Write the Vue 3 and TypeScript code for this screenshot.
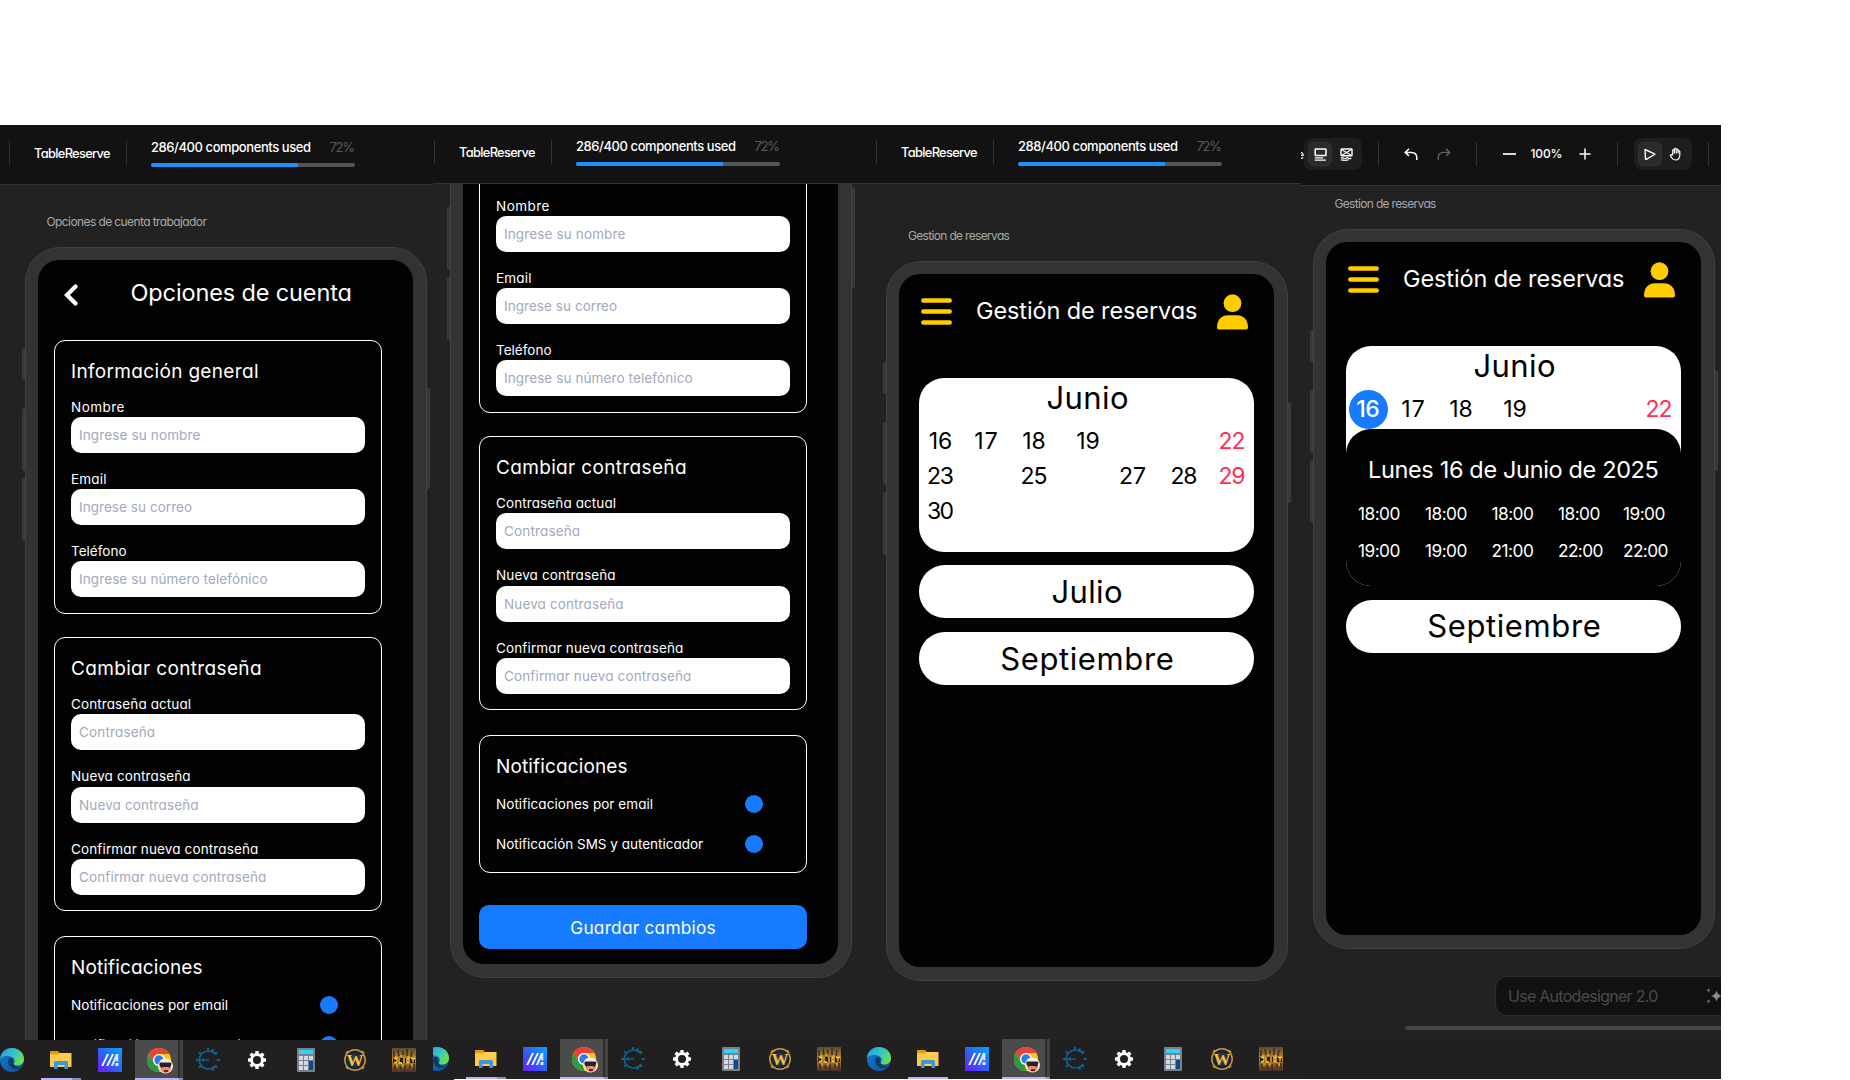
<script setup lang="ts">
interface Field { label: string; labelWidth: number; hint: string; hintWidth: number }
interface Day { n: string; col: number; row: number; sunday?: boolean }
interface Editor { id: string; used: string; left: number; top: number }

// Spreads the letters of a label so that its drawn width matches the design value.
const vFit = {
  mounted(el: HTMLElement, binding: { value: number }) {
    const size = parseFloat(getComputedStyle(el).fontSize)
    const natural = el.getBoundingClientRect().width
    const count = (el.textContent ?? '').trim().length
    const spacing = (binding.value + size * 0.08 - natural) / Math.max(1, count - 1)
    el.style.letterSpacing = spacing.toFixed(3) + 'px'
    el.style.marginRight = (-spacing).toFixed(3) + 'px'
  },
}

const editors: Editor[] = [
  { id: 'a', used: '286/400 components used', left: 25, top: 62 },
  { id: 'b', used: '286/400 components used', left: 25, top: -138 },
  { id: 'c', used: '288/400 components used', left: 19, top: 77 },
]

const general: Field[] = [
  { label: 'Nombre', labelWidth: 52.3, hint: 'Ingrese su nombre', hintWidth: 120.3 },
  { label: 'Email', labelWidth: 34.5, hint: 'Ingrese su correo', hintWidth: 112 },
  { label: 'Teléfono', labelWidth: 54.5, hint: 'Ingrese su número telefónico', hintWidth: 187.5 },
]
const password: Field[] = [
  { label: 'Contraseña actual', labelWidth: 119, hint: 'Contraseña', hintWidth: 75 },
  { label: 'Nueva contraseña', labelWidth: 118.5, hint: 'Nueva contraseña', hintWidth: 118.5 },
  { label: 'Confirmar nueva contraseña', labelWidth: 186.3, hint: 'Confirmar nueva contraseña', hintWidth: 186.3 },
]
const formCards = [
  { id: 'general', title: 'Información general', width: 186, fields: general },
  { id: 'password', title: 'Cambiar contraseña', width: 189, fields: password },
]

const firstWeek: Day[] = [
  { n: '16', col: 1, row: 1 },
  { n: '17', col: 2, row: 1 },
  { n: '18', col: 3, row: 1 },
  { n: '19', col: 4, row: 1 },
  { n: '22', col: 7, row: 1, sunday: true },
]
const june: Day[] = [
  ...firstWeek,
  { n: '23', col: 1, row: 2 },
  { n: '25', col: 3, row: 2 },
  { n: '27', col: 5, row: 2 },
  { n: '28', col: 6, row: 2 },
  { n: '29', col: 7, row: 2, sunday: true },
  { n: '30', col: 1, row: 3 },
]
const dayWidth: Record<string, number> = { '16': 21.5, '17': 21.5, '18': 21.5, '19': 21.5 }
const hours = ['18:00', '18:00', '18:00', '18:00', '19:00', '19:00', '19:00', '21:00', '22:00', '22:00']
const teeth = [0, 45, 90, 135, 180, 225, 270, 315]
const ceTeeth = [50, 90, 130, 180, 230, 270, 310]
</script>

<template>
  <div class="page">
    <svg class="defs" width="0" height="0" aria-hidden="true">
      <defs>
        <linearGradient id="edgeTop" x1="0" y1="0" x2="1" y2="0.6"><stop offset="0" stop-color="#1f9ee6" /><stop offset=".55" stop-color="#35c1c9" /><stop offset="1" stop-color="#6be04c" /></linearGradient>
        <linearGradient id="edgeLow" x1="0" y1="0" x2="1" y2="1"><stop offset="0" stop-color="#1380d8" /><stop offset="1" stop-color="#0c4f9c" /></linearGradient>
        <linearGradient id="maBg" x1="0" y1="1" x2="1" y2="0"><stop offset="0" stop-color="#6a1cff" /><stop offset=".5" stop-color="#2d63f6" /><stop offset="1" stop-color="#00a8ff" /></linearGradient>
        <radialGradient id="wBg"><stop offset="0" stop-color="#3a4a66" /><stop offset="1" stop-color="#141a26" /></radialGradient>
        <linearGradient id="artBg" x1="0" y1="0" x2="0" y2="1"><stop offset="0" stop-color="#574c35" /><stop offset=".5" stop-color="#c98a22" /><stop offset="1" stop-color="#46302c" /></linearGradient>
      </defs>
    </svg>

    <main class="board">
      <section v-for="e in editors" :key="e.id" class="strip" :class="'strip-' + e.id">
        <div class="inner">
          <header class="bar">
            <i class="sep"></i>
            <div class="project"><span v-fit="75.5">TableReserve</span></div>
            <i class="sep"></i>
            <div class="usage">
              <div class="usage-text">
                <span v-fit="159">{{ e.used }}</span>
                <span v-fit="24.5" class="percent">72%</span>
              </div>
              <div class="track"><div class="fill"></div></div>
            </div>
          </header>

          <div class="canvas">
            <div v-if="e.id === 'a'" class="frame-name"><span v-fit="159.5">Opciones de cuenta trabajador</span></div>
            <div v-if="e.id === 'c'" class="frame-name"><span v-fit="101">Gestion de reservas</span></div>

            <div class="phone" :style="{ left: e.left + 'px', top: e.top + 'px' }">
              <i class="key k1"></i><i class="key k2"></i><i class="key k3"></i><i class="key k4"></i>

              <div v-if="e.id !== 'c'" class="screen account">
                <div class="account-head">
                  <svg class="chevron" width="14" height="22" viewBox="0 0 14 22"><path d="M11.5 2.5 3 11l8.500 8.500" fill="none" stroke="#fff" stroke-width="4.200" stroke-linecap="round" stroke-linejoin="miter" /></svg>
                  <h1><span v-fit="219.500">Opciones de cuenta</span></h1>
                </div>
                <div v-for="c in formCards" :key="c.id" class="card" :class="c.id">
                  <h2><span v-fit="c.width">{{ c.title }}</span></h2>
                  <div v-for="f in c.fields" :key="f.label" class="field">
                    <div class="label"><span v-fit="f.labelWidth">{{ f.label }}</span></div>
                    <div class="input"><span v-fit="f.hintWidth">{{ f.hint }}</span></div>
                  </div>
                </div>
                <div class="card notices">
                  <h2><span v-fit="130">Notificaciones</span></h2>
                  <div class="notice"><span v-fit="156">Notificaciones por email</span><i class="dot"></i></div>
                  <div class="notice"><span v-fit="206">Notificación SMS y autenticador</span><i class="dot"></i></div>
                </div>
                <div class="save"><span v-fit="144">Guardar cambios</span></div>
              </div>

              <div v-else class="screen bookings">
                <div class="bookings-head">
                  <svg class="menu" width="31" height="27" viewBox="0 0 31 27"><path d="M2.400 2.500h26.200M2.400 13.500h26.200M2.400 24.500h26.200" stroke="#fc0" stroke-width="4.700" stroke-linecap="round" /></svg>
                  <h1><span v-fit="219.500">Gestión de reservas</span></h1>
                  <svg class="user" width="31" height="36" viewBox="0 0 31 36"><circle cx="15.500" cy="9.200" r="8.900" fill="#fc0" /><path d="M2 35.500Q0 35.500 0 33.500C0 26 4.500 21.200 11 21.200h9c6.500 0 11 4.800 11 12.300q0 2-2 2z" fill="#fc0" /></svg>
                </div>
                <div class="month open">
                  <h3><span v-fit="79.500">Junio</span></h3>
                  <div class="days">
                    <span v-for="d in june" :key="d.n" v-fit="dayWidth[d.n] ?? 25" :class="['c' + d.col, 'r' + d.row, { sunday: d.sunday }]">{{ d.n }}</span>
                  </div>
                </div>
                <div class="month"><span v-fit="68.500">Julio</span></div>
                <div class="month"><span v-fit="171">Septiembre</span></div>
              </div>
            </div>
          </div>

          <footer class="taskbar">
            <div class="task">
              <svg width="24" height="24" viewBox="0 0 24 24"><circle cx="12" cy="12" r="12" fill="url(#edgeLow)" /><path d="M0 11C.5 4.500 5.500 0 12 0c7 0 12 5 12 11 0 4-3 6.500-6.500 6.500-2.500 0-4-1-3.500-2 1.500-2 1-6-3.500-7C6 7.500 2 8.500 0 11z" fill="url(#edgeTop)" /><path d="M9 10.500c-2 4 0 8.500 4 10 3 1.200 6.500.5 9-1.800-1 .5-3.500 1-6-.2-3-1.500-3.500-4-2.500-6.500-.5-1.500-3-2.500-4.500-1.500z" fill="#123b63" /></svg>
            </div>
            <div class="task open-app">
              <svg width="22" height="20" viewBox="0 0 22 20"><path d="M0 1h8l2 2H0z" fill="#e09a00" /><path d="M0 3h21.500v14H0z" fill="#ffcb4f" /><path d="M0 3h10l-1.500 1.500H0z" fill="#e5a50a" /><path d="M4 19v-6.500q0-1.500 1.500-1.500h11q1.500 0 1.500 1.500V19h-3.500v-4h-7v4z" fill="#3a96dd" /></svg>
            </div>
            <div class="task">
              <svg width="24" height="24" viewBox="0 0 24 24"><path d="M0 0h24v24H0z" fill="url(#maBg)" /><path d="M3.200 18 9 6h2l-5.800 12zM8.200 18 14 6h2l-5.800 12z" fill="#fff" /><path d="M12.800 18 18 6h2.300v7.500h-2V11l-3.300 7zM17.500 15h3v3h-3z" fill="#dfe8ff" /></svg>
            </div>
            <div class="task current">
              <svg width="28" height="26" viewBox="0 0 28 26"><circle cx="12" cy="12" r="12" fill="#fbc116" /><path d="M1.600 6A12 12 0 0 1 22.400 6H12a6 6 0 0 0-5.200 9z" fill="#ea4335" /><path d="M1.600 6A12 12 0 0 0 12 24l5.200-9A6 6 0 0 1 6.800 15z" fill="#2a9a45" /><circle cx="12" cy="12" r="6" fill="#fff" /><circle cx="12" cy="12" r="4.700" fill="#2a7de9" /><circle cx="18.500" cy="18" r="7.600" fill="#f7e3c6" /><path d="M13.500 17h10v4.500q-2 4-5 3.500-4-.5-5-4z" fill="#e58c77" /><path d="M12.500 15q5-4 12 0l-.500 2.500-1.500 3-1-1.500h-6l-1 1-2-2.500z" fill="#2c2020" /><path d="M13 12.500q5-3.500 11 0l-.5 2h-10z" fill="#eee" /><path d="M17 22h4v2h-4z" fill="#702525" /></svg>
            </div>
            <div class="task">
              <svg width="24" height="24" viewBox="0 0 24 24"><g fill="none" stroke="#10608f" stroke-width="1.700"><path d="M18.500 5.500A9 9 0 1 0 18.500 18.500" /><path d="M4 12h9M7 10v4" stroke-width="1.300" /></g><g fill="#10608f"><rect v-for="a in ceTeeth" :key="a" x="11" y="0" width="2" height="3.400" :transform="'rotate(' + (a + 180) + ' 12 12)'" /><path d="M15 1.500h3v3h-3zM18 4h3v2.500h-3zM15 19.500h3v3h-3zM18 17.500h3V20h-3z" /></g></svg>
            </div>
            <div class="task">
              <svg width="18" height="18" viewBox="0 0 18 18"><circle cx="9" cy="9" r="5.500" fill="none" stroke="#fff" stroke-width="3" /><rect v-for="a in teeth" :key="a" x="7.300" y="0" width="3.400" height="3.500" rx=".5" fill="#fff" :transform="'rotate(' + a + ' 9 9)'" /></svg>
            </div>
            <div class="task">
              <svg width="18" height="24" viewBox="0 0 18 24"><rect width="18" height="24" rx="1" fill="#78828c" /><path d="M2 2h14v4H2z" fill="#35d0f5" /><path d="M2 8h4v4H2zM7 8h4v4H7zM12 8h4v4h-4zM2 13h4v4H2zM7 13h4v4H7zM2 18h4v4H2zM7 18h4v4H7z" fill="#d5d9dd" /><path d="M12 13h4v9h-4z" fill="#0d4a8c" /></svg>
            </div>
            <div class="task">
              <svg width="24" height="24" viewBox="0 0 24 24"><circle cx="12" cy="12" r="10.200" fill="url(#wBg)" stroke="#c79a3a" stroke-width="1.500" /><path d="M2.500 5 5 3M19 3l2.500 2M2.500 19 5 21M19 21l2.500-2" stroke="#e8c766" /><text x="12" y="17.800" text-anchor="middle" class="w-letter">W</text></svg>
            </div>
            <div class="task">
              <svg width="24" height="24" viewBox="0 0 24 24"><path d="M0 0h24v24H0z" fill="url(#artBg)" /><path d="M2 3v6M6 2l1 6M11 3v4M15 1v7M20 3l-1 6M3 17v5M8 18l1 4M13 17v6M18 17v4M22 16v6" stroke="#3b2c22" stroke-width="1.500" /><path d="M1 10h22v5H1z" fill="#2b1a08" /><path d="M2 10.500h3v4M7 10v5h3M12 10v5M15 10.500h2v4h-2zM19 10.500h4M21 10.500v4M2 14.500h3" fill="none" stroke="#ffd23c" stroke-width="1.300" /><path d="M4 8v2M9 7v2M17 8v2M5 16v3M11 16v3M20 16v3" stroke="#ffc52c" /></svg>
            </div>
          </footer>
        </div>
      </section>

      <section class="strip strip-d">
        <header class="bar tools">
          <div class="cut"><span>e</span></div>
          <div class="group">
            <div class="tool on"><svg width="13" height="13" viewBox="0 0 13 13" fill="none" stroke="#fff" stroke-width="1.500"><rect x="1.200" y="1" width="10.800" height="6.600" rx=".6" /><path d="M.8 9.900h8.400M.8 12.200h11" stroke-width="1.300" /></svg></div>
            <div class="tool"><svg width="13" height="13" viewBox="0 0 13 13" fill="none" stroke="#fff" stroke-width="1.400"><rect x="1" y="1" width="11" height="6.800" rx=".6" /><path d="m1.500 1.500 10 6M11.500 1.500l-10 6" stroke-width="1.100" /><path d="M.8 10.200q1.300-1 2.600 0t2.600 0 2.600 0 2.600-.2M.8 12.300q1.300-1 2.600 0t2.600 0 2.600 0" stroke-width="1.200" /></svg></div>
          </div>
          <i class="sep s1"></i>
          <svg class="undo" width="14" height="13" viewBox="0 0 14 13" fill="none" stroke="#fff" stroke-width="1.500"><path d="M5 .8 1.200 4.400 5 8M1.200 4.400h6.300q5.300 0 5.300 5.300V12" /></svg>
          <svg class="redo" width="14" height="13" viewBox="0 0 14 13" fill="none" stroke="#666" stroke-width="1.300"><path d="M9 .8l3.800 3.600L9 8M12.800 4.400H6.500q-5.300 0-5.300 5.300V12" /></svg>
          <i class="sep s2"></i>
          <svg class="minus" width="13" height="12" viewBox="0 0 13 12"><path d="M0 6h13" stroke="#fff" stroke-width="1.700" /></svg>
          <div class="zoom"><span v-fit="31">100%</span></div>
          <svg class="plus" width="12" height="12" viewBox="0 0 12 12"><path d="M.5 6h11M6 .5v11" stroke="#fff" stroke-width="1.500" /></svg>
          <i class="sep s3"></i>
          <div class="group second">
            <div class="tool on"><svg width="13" height="13" viewBox="0 0 13 13" fill="none" stroke="#fff" stroke-width="1.400" stroke-linejoin="round"><path d="M2 1.500 11.500 5.800q.6.300 0 .7L3.300 11.300q-.8.300-.8-.4z" /></svg></div>
            <div class="tool"><svg width="13" height="14" viewBox="0 0 13 14" fill="none" stroke="#fff" stroke-width="1.200" stroke-linejoin="round" stroke-linecap="round"><path d="M3.700 7.500V3.200q.9-1.200 1.700 0V2q.9-1.500 1.800 0v.6q.9-1 1.800.2v1.500q1-.9 1.800.3V8q-.2 5-4.300 5-2.500 0-3.800-2.200L1.400 8.400q.4-1.300 1.700-.4zM5.400 3.200V6M7.200 2.600V6M9 4.300V6" /></svg></div>
          </div>
          <i class="sep s4"></i>
        </header>

        <div class="canvas">
          <div class="frame-name"><span v-fit="101">Gestion de reservas</span></div>
          <div class="phone fourth">
            <i class="key k1"></i><i class="key k2"></i><i class="key k3"></i><i class="key k4"></i>
            <div class="screen bookings">
              <div class="bookings-head">
                <svg class="menu" width="31" height="27" viewBox="0 0 31 27"><path d="M2.400 2.500h26.200M2.400 13.500h26.200M2.400 24.500h26.200" stroke="#fc0" stroke-width="4.700" stroke-linecap="round" /></svg>
                <h1><span v-fit="219.500">Gestión de reservas</span></h1>
                <svg class="user" width="31" height="36" viewBox="0 0 31 36"><circle cx="15.500" cy="9.200" r="8.900" fill="#fc0" /><path d="M2 35.500Q0 35.500 0 33.500C0 26 4.500 21.200 11 21.200h9c6.500 0 11 4.800 11 12.300q0 2-2 2z" fill="#fc0" /></svg>
              </div>
              <div class="month open detail">
                <h3><span v-fit="79.500">Junio</span></h3>
                <div class="days">
                  <span v-for="d in firstWeek" :key="d.n" v-fit="dayWidth[d.n] ?? 25" :class="['c' + d.col, 'r' + d.row, { sunday: d.sunday, picked: d.n === '16' }]">{{ d.n }}</span>
                </div>
                <div class="slots">
                  <h4><span v-fit="289">Lunes 16 de Junio de 2025</span></h4>
                  <div class="hours">
                    <div v-for="(h, i) in hours" :key="i"><span v-fit="h === '22:00' ? 44 : 41">{{ h }}</span></div>
                  </div>
                </div>
              </div>
              <div class="month last"><span v-fit="171">Septiembre</span></div>
            </div>
          </div>
          <div class="prompt">
            <span v-fit="149">Use Autodesigner 2.0</span>
            <svg width="22" height="18" viewBox="0 0 22 18"><path d="M10.500 3.500q1 4.300 5.500 5.500-4.500 1.200-5.500 5.500Q9.500 10.200 5 9q4.500-1.200 5.500-5.500z" fill="#8a8a8a" /><path d="M2.500 1q.5 1.800 2.300 2.300-1.800.5-2.300 2.300Q2 3.800.2 3.300 2 2.800 2.500 1zM2.500 12q.5 1.800 2.300 2.300-1.800.5-2.300 2.300-.5-1.800-2.300-2.300Q2 13.800 2.500 12z" fill="#666" /></svg>
          </div>
          <div class="scroll"></div>
        </div>
        <footer class="taskbar empty"></footer>
      </section>
    </main>
  </div>
</template>

<style>
body { background: #fff; overflow: hidden; }
</style>

<style scoped>
.page { width: 1850px; height: 1080px; padding-top: 125px; box-sizing: border-box; overflow: hidden; background: #fff; font-family: Inter, "Noto Sans", sans-serif; font-feature-settings: "cv11"; color: #fff; }
.defs { display: block; position: absolute; }
.page span { white-space: nowrap; }
.board { display: flex; width: 1721px; height: 955px; align-items: flex-start; }
.strip { flex: none; height: 954px; overflow: hidden; background: #222; position: relative; }
.strip-a { width: 454px; height: 955px; }
.strip-b { width: 434px; margin-left: -21px; }
.strip-c { width: 434px; }
.strip-d { width: 420px; display: flex; flex-direction: column; }
.inner { display: flex; flex-direction: column; height: 100%; }
.strip-b .inner { margin-left: -8px; }

.bar { flex: none; height: 59px; box-sizing: border-box; border-bottom: 1px solid #333; background: #121212; display: flex; align-items: flex-start; padding: 15px 0 0 9px; }
.strip-a .bar { height: 60px; padding-top: 16px; }
.sep { flex: none; width: 1px; height: 24px; background: #333; }
.project { width: 77px; margin: 0 15px 0 24px; font-size: 12.800px; font-weight: 500; line-height: 26px; }
.project + .sep { margin-right: 24px; }
.usage { width: 204px; margin-top: -2px; }
.usage-text { display: flex; justify-content: space-between; font-size: 13px; font-weight: 500; line-height: 16px; }
.percent { color: #5a5a5a; font-weight: 400; }
.track { height: 4px; margin-top: 8px; border-radius: 2px; background: #555; overflow: hidden; }
.fill { width: 147px; height: 4px; background: #1e8fff; }

.canvas { flex: 1; position: relative; overflow: hidden; background: #222; }
.frame-name { font-size: 12px; line-height: 16px; color: #a8a8a8; }
.strip-a .frame-name { padding: 29px 0 0 46.500px; }
.strip-c .frame-name { padding: 44px 0 0 41px; }
.strip-d .frame-name { padding: 10px 0 0 33.500px; }

.phone { position: absolute; box-sizing: border-box; padding: 12px 13px 13px 12px; border: 1px solid #414141; border-radius: 35px; background: #333; width: 402px; }
.fourth { left: 12px; top: 43px; }
.key { position: absolute; width: 3px; background: #333; border: 1px solid #3d3d3d; box-sizing: border-box; left: -4px; border-radius: 2px 0 0 2px; }
.k1 { top: 100px; height: 32px; }
.k2 { top: 160px; height: 63px; }
.k3 { top: 230px; height: 63px; }
.k4 { top: 140px; height: 101px; left: auto; right: -4px; border-radius: 0 2px 2px 0; }
.screen { background: #020202; border-radius: 21px; overflow: hidden; box-sizing: border-box; }
.account { height: 905px; padding: 0 31px 0 16px; }
.bookings { height: 693px; padding: 0 20px; }

h1, h2, h3, h4 { margin: 0; font-weight: 400; }
h1 { font-size: 23.500px; line-height: 30px; }
.account-head { height: 80px; box-sizing: border-box; display: flex; align-items: flex-start; padding: 18px 0 0 10px; }
.account-head .chevron { margin: 6px 52.500px 0 0; }
.card { height: 274px; box-sizing: border-box; border: 1px solid #fff; border-radius: 11px; padding: 19px 16px 0; margin-bottom: 23px; }
.card h2 { font-size: 19px; line-height: 24px; margin-bottom: 14px; }
.password { margin-bottom: 25px; }
.field { margin-bottom: 17px; }
.label { font-size: 13.500px; line-height: 18px; margin-bottom: 1px; }
.input { height: 36px; box-sizing: border-box; border-radius: 10px; background: #fff; color: #a2a9be; font-size: 13.500px; line-height: 36px; padding-left: 8px; }
.password .field:nth-child(2) { margin-bottom: 17px; }
.password .field:nth-child(3) .label { margin-bottom: 2px; }
.notices { height: 138px; margin-bottom: 32px; }
.card.notices h2 { margin-bottom: 16px; }
.notice { display: flex; justify-content: space-between; width: 267px; height: 18px; line-height: 18px; font-size: 13.500px; margin-bottom: 22px; }
.dot { width: 18px; height: 18px; border-radius: 50%; background: #177bff; }
.save { height: 44px; border-radius: 10px; background: #177bff; display: flex; justify-content: center; font-size: 17.300px; line-height: 46px; }

.bookings-head { display: flex; align-items: flex-start; height: 104px; box-sizing: border-box; padding-left: 2px; }
.menu { margin: 24px 24px 0 0; }
.bookings-head h1 { width: 220px; margin-top: 22px; }
.user { margin: 19.500px 0 0 21px; }
.month { height: 53px; border-radius: 26px; background: #fff; color: #000; display: flex; justify-content: center; font-size: 31px; line-height: 53px; margin-bottom: 14px; padding-left: 1px; box-sizing: border-box; }
.month.last { line-height: 52px; }
.open { height: 174px; display: block; margin-bottom: 13px; border-radius: 25px; padding-left: 0; }
.month h3 { font-size: 31px; line-height: 39px; text-align: center; padding-left: 2px; }
.days { display: grid; grid-template-columns: 43px 48px 48px 60px 29px 74px 22px; grid-template-rows: repeat(3, 35px); justify-items: center; align-items: center; padding: 7px 0 0; font-size: 23px; line-height: 35px; font-weight: 400; }
.c1 { grid-column: 1; }
.c2 { grid-column: 2; }
.c3 { grid-column: 3; }
.c4 { grid-column: 4; }
.c5 { grid-column: 5; }
.c6 { grid-column: 6; }
.c7 { grid-column: 7; }
.r1 { grid-row: 1; }
.r2 { grid-row: 2; }
.r3 { grid-row: 3; }
.sunday { color: #ff2d55; }

.detail { height: 240px; margin-bottom: 14px; }
.detail .days { grid-template-rows: 35px; height: 44px; box-sizing: border-box; }
.picked { position: relative; z-index: 0; color: #fff; font-weight: 500; left: .5px; }
.picked::before { content: ""; position: absolute; z-index: -1; width: 39px; height: 39px; border-radius: 50%; background: #177bff; left: 50%; top: 50%; margin: -19.500px 0 0 -19px; }
.slots { position: relative; height: 157px; box-sizing: border-box; border-radius: 25px; background: #020202; color: #fff; padding: 26px 0 0 12px; }
.slots h4 { font-size: 23.500px; line-height: 30px; padding-left: 10px; }
.hours { display: grid; grid-template-columns: 67px 66.500px 66.500px 65px 50px; grid-template-rows: 37px 37px; font-size: 17.300px; line-height: 37px; margin-top: 9.500px; }
.detail h3 { height: 39px; }

.taskbar { flex: none; height: 40px; background: #211f20; display: flex; }
.task { flex: none; width: 49px; height: 40px; display: flex; align-items: center; justify-content: center; box-sizing: border-box; position: relative; }
.task:first-child { width: 36.500px; justify-content: flex-start; }
.open-app::after { content: ""; position: absolute; left: 4.500px; bottom: 0; width: 40px; height: 2px; background: linear-gradient(90deg, #b3b8fa 0 31px, #8a8cc0 31px); }
.strip-c .open-app::after { background: #b3b8fa; }
.current::before { content: ""; position: absolute; left: .5px; top: 0; width: 48px; height: 40px; background: linear-gradient(90deg, #4b4b4b 0 43.500px, #2e2e2e 43.500px 45px, #434343 45px); }
.current::after { content: ""; position: absolute; left: .5px; bottom: 0; width: 48px; height: 2px; background: linear-gradient(90deg, #b3b8fa 0 44px, #8a8cc0 44px); }
.current svg { position: relative; left: 2px; top: 1px; }
.w-letter { font: 700 17px "Liberation Serif", serif; fill: #f5c03c; }
.empty { height: 39px; background: #1f1f21; }

.tools { height: 61px; padding: 13px 0 0; }
.cut { width: 3px; height: 32px; overflow: hidden; font-size: 12px; font-weight: 500; line-height: 34px; display: flex; justify-content: flex-end; }
.group { display: flex; box-sizing: border-box; width: 58px; height: 32px; padding: 4px; gap: 2px; background: #1e1e1e; border-radius: 8px; }
.tool { width: 24px; height: 24px; display: flex; align-items: center; justify-content: center; border-radius: 6px; box-sizing: border-box; }
.on { background: #2b2b2b; border: 1px solid #343434; }
.tools .sep { margin-top: 4px; }
.s1 { margin-left: 16px; margin-right: 25px; }
.undo { margin-top: 10px; }
.redo { margin: 10px 0 0 18.500px; }
.s2 { margin-left: 25px; }
.minus { margin: 9.500px 0 0 26px; }
.zoom { width: 32px; margin: 4px 16px 0 15px; font-size: 12px; font-weight: 500; line-height: 24px; }
.plus { margin-top: 9.500px; }
.s3 { margin-left: 26px; margin-right: 16px; }
.s4 { margin-left: 16px; }

.prompt { position: absolute; left: 194px; top: 790px; width: 260px; height: 40px; box-sizing: border-box; border: 1px solid #2e2e2e; border-radius: 12px; background: #111; color: #4a4a4a; font-size: 16px; line-height: 38px; padding-left: 12px; display: flex; justify-content: flex-start; align-items: center; }
.prompt svg { margin-left: 48px; }
.scroll { position: absolute; left: 103.500px; top: 840px; width: 330px; height: 4px; border-radius: 2px; background: #444; }
</style>
